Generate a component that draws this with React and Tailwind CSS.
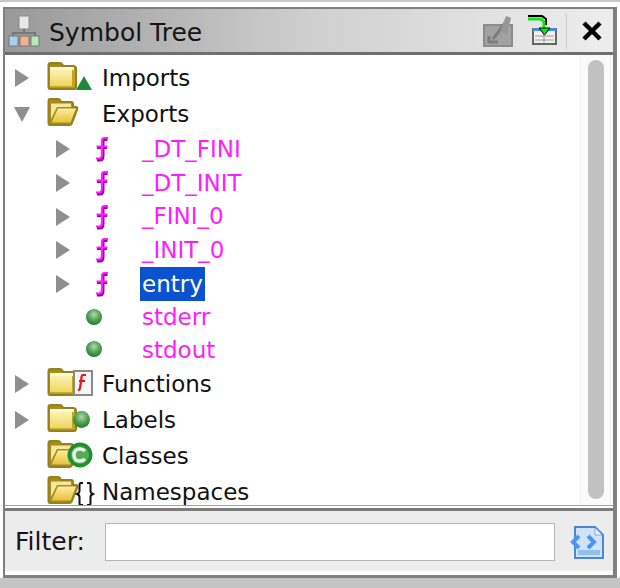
import React from "react";

const Tri = ({ open }) => (
  <svg width="16" height="18" viewBox="0 0 16 18" className="block shrink-0">
    <polygon points={open ? "0,2 16,2 8,17" : "1,0 15,9 1,18"} fill="#8f8f8f" />
  </svg>
);

const Grad = () => (
  <svg width="0" height="0" className="absolute">
    <defs>
      <linearGradient id="fc" x1="0" y1="0" x2="0" y2="1">
        <stop offset="0" stopColor="#fbf2b4" />
        <stop offset="1" stopColor="#f0d65e" />
      </linearGradient>
      <linearGradient id="fo" x1="0" y1="0" x2="0" y2="1">
        <stop offset="0" stopColor="#fbeea0" />
        <stop offset="1" stopColor="#e6c23e" />
      </linearGradient>
      <radialGradient id="ball" cx="0.5" cy="0.35" r="0.65">
        <stop offset="0" stopColor="#b4d6b4" />
        <stop offset="0.6" stopColor="#4d9c4d" />
        <stop offset="1" stopColor="#1f7f2a" />
      </radialGradient>
    </defs>
  </svg>
);

const FolderClosed = () => (
  <svg width="32" height="28" viewBox="0 0 32 28" className="block shrink-0">
    <path d="M1.5 3 Q1.5 1 3.5 1 H13 Q15 1 16 4 H26 Q29 4 29 7 V25 Q29 27 27 27 H3 Q1.5 27 1.5 25 Z" fill="#a78c1c" stroke="#94801c" strokeWidth="2" />
    <rect x="3" y="5" width="24" height="3" fill="#fdf8d8" />
    <rect x="3" y="8" width="22" height="16" fill="url(#fc)" />
    <rect x="25" y="8" width="3" height="17" fill="#c2a428" />
    <rect x="3" y="24" width="24" height="1.5" fill="#c8aa2c" />
  </svg>
);

const FolderOpen = () => (
  <svg width="32" height="28" viewBox="0 0 32 28" className="block shrink-0">
    <path d="M1.5 3 Q1.5 1 3.5 1 H11 Q13 1 14 4 H24 Q26 4 26 6 V9 H29 Q31 9 30 12 L25 25 Q24.5 27 23 27 H3 Q1.5 27 1.5 25 Z" fill="#a78c1c" stroke="#94801c" strokeWidth="2" />
    <path d="M4 5.5 H24 V9 H10 L4 21 Z" fill="#f7e79a" />
    <path d="M11 10.5 H29 L23.5 24.5 H4.5 Z" fill="url(#fo)" />
  </svg>
);

const Func = () => (
  <svg width="14" height="26" viewBox="0 0 14 26" className="block shrink-0">
    <path d="M12.5 3.5 H9.5 Q8 3.5 8 6 V20 Q8 24 5 24 H2" fill="none" stroke="#9a009a" strokeWidth="3" />
    <path d="M2 12 H12" stroke="#9a009a" strokeWidth="2" />
    <path d="M13 2 H9.5 Q7 2 7 5 V18.5 Q7 22.5 4 22.5 H1" fill="none" stroke="#ff1cff" strokeWidth="2.2" />
    <path d="M1.5 10.5 H12.5" stroke="#ff1cff" strokeWidth="2" />
  </svg>
);

const Ball = () => (
  <svg width="16" height="16" viewBox="0 0 16 16" className="block shrink-0">
    <circle cx="8" cy="8" r="8" fill="url(#ball)" />
  </svg>
);

const Row = ({ h, pl, tri, icon, iconW, label, labelClass = "text-[#111]" }) => (
  <div className="flex items-center shrink-0" style={{ height: h, paddingLeft: pl }}>
    <div className="w-[32px] shrink-0 flex items-center">{tri}</div>
    <div className="shrink-0 flex items-center" style={{ width: iconW }}>{icon}</div>
    <div className={labelClass}>{label}</div>
  </div>
);

const TopIcon = ({ children }) => (
  <div className="relative w-[50px] h-[28px] ml-[1px] mb-[4px]">{children}</div>
);

const fnHeights = [34, 34, 33, 34];

export default function App() {
  return (
    <div className="relative w-[620px] h-[588px] bg-[#c4c4c4] flex flex-col overflow-hidden text-[23px] leading-none" style={{ fontFamily: '"DejaVu Sans", sans-serif' }}>
      <Grad />
      <div className="h-[2px] bg-[#c8c8c8] shrink-0" />
      <div className="h-[576px] w-[620px] bg-white pt-[5px] pr-[3px] pl-[3px] flex flex-col shrink-0">
        <div className="flex-1 flex flex-col border-t-[2px] border-l-[2px] border-b-[3px] border-r-[4px] border-[#7f7f7f] bg-white min-h-0">
          {/* title bar */}
          <div className="h-[46px] shrink-0 flex items-center border-b-[3px] border-[#6f6f6f] bg-gradient-to-r from-[#999999] via-[#cfcfcf] to-[#eeeeee]">
            <svg width="32" height="32" viewBox="0 0 32 32" className="ml-[3px] block shrink-0">
              <rect x="11" y="1" width="10" height="13" fill="#e8e8e8" stroke="#8a8a8a" />
              <path d="M16 14 V18 M5 21 V18 H27 V21" stroke="#777" strokeWidth="2" fill="none" />
              <rect x="1" y="21" width="9" height="10" fill="#a9d0ee" stroke="#777" />
              <rect x="12" y="21" width="9" height="10" fill="#f2b290" stroke="#777" />
              <rect x="23" y="21" width="8" height="10" fill="#b4ecb4" stroke="#777" />
            </svg>
            <span className="ml-[9px] mt-[3px] text-[#141414] text-[25px]">Symbol Tree</span>
            <div className="ml-auto flex items-center">
              <svg width="30" height="32" viewBox="0 0 30 32" className="block shrink-0">
                <rect x="1" y="10" width="28" height="21" fill="#a2a2a2" stroke="#8c8c8c" strokeWidth="2" />
                <path d="M6 21 V27 H15 M10 24 L22 8" stroke="#7c7c7c" strokeWidth="3" fill="none" />
                <path d="M17 17 L23 1 L28 3 L24 19 Z" fill="#969696" />
              </svg>
              <svg width="30" height="32" viewBox="0 0 30 32" className="ml-[15px] block shrink-0">
                <rect x="5" y="14" width="23" height="15" fill="#f0f0f0" stroke="#666" strokeWidth="2" />
                <rect x="5" y="13" width="23" height="3" fill="#3b8fe6" />
                <path d="M7 21 H26 M7 25 H26 M16 17 V28" stroke="#9a9a9a" />
                <path d="M0 1 H14 L18 4 V10" stroke="#000" strokeWidth="2" fill="none" />
                <path d="M0 4 H13 L16 7 V14" stroke="#16e016" strokeWidth="3" fill="none" />
                <path d="M11 13 H22 L16.5 20 Z" fill="#16e016" stroke="#000" />
              </svg>
              <div className="w-px h-[36px] bg-[#cccccc] ml-[8px]" />
              <svg width="20" height="20" viewBox="0 0 20 20" className="ml-[15px] mr-[11px] block shrink-0">
                <path d="M2 2 L18 18 M18 2 L2 18" stroke="#000" strokeWidth="4.5" />
              </svg>
            </div>
          </div>
          {/* tree */}
          <div className="flex-1 min-h-0 flex pt-[5px] overflow-hidden">
            <div className="flex-1 flex flex-col min-w-0 overflow-hidden">
              <Row h={36} pl={9} tri={<Tri />} iconW={56} icon={
                <TopIcon><FolderClosed />
                  <svg width="16" height="14" viewBox="0 0 16 14" className="absolute left-[29px] top-[14px]"><polygon points="8,0 16,14 0,14" fill="#1f8a3f" /></svg>
                </TopIcon>} label="Imports" />
              <Row h={36} pl={9} tri={<Tri open />} iconW={56} icon={<TopIcon><FolderOpen /></TopIcon>} label="Exports" />
              {["_DT_FINI", "_DT_INIT", "_FINI_0", "_INIT_0"].map((n, i) => (
                <Row key={n} h={fnHeights[i]} pl={50} tri={<Tri />} iconW={53} icon={<div className="pl-[8px]"><Func /></div>} label={n} labelClass="text-[#ff1cff] pl-[2px]" />
              ))}
              <Row h={34} pl={50} tri={<Tri />} iconW={53} icon={<div className="pl-[8px]"><Func /></div>} label="entry" labelClass="bg-[#0a52d0] text-white h-[34px] flex items-center px-[2px]" />
              {[["stderr", 33], ["stdout", 32]].map(([n, h]) => (
                <Row key={n} h={h} pl={50} iconW={53} icon={<div className="-ml-[1px] mb-[2px]"><Ball /></div>} label={n} labelClass="text-[#ff1cff] pl-[2px]" />
              ))}
              <Row h={36} pl={9} tri={<Tri />} iconW={56} icon={
                <TopIcon><FolderClosed />
                  <svg width="20" height="26" viewBox="0 0 20 26" className="absolute left-[26px] top-[2px]">
                    <rect x="1" y="1" width="18" height="24" fill="#f6f6f6" stroke="#8a8a8a" strokeWidth="2" />
                    <path d="M13 5 H10 Q8.5 5 8.5 8 L7 18 Q7 20 5 20 M6 11 H12" fill="none" stroke="#ee1111" strokeWidth="2.2" />
                  </svg>
                </TopIcon>} label="Functions" />
              <Row h={36} pl={9} tri={<Tri />} iconW={56} icon={
                <TopIcon><FolderClosed />
                  <svg width="17" height="17" viewBox="0 0 16 16" className="absolute left-[26px] top-[7px]">
                    <circle cx="8" cy="8" r="8" fill="url(#ball)" />
                  </svg>
                </TopIcon>} label="Labels" />
              <Row h={36} pl={9} iconW={56} icon={
                <TopIcon><FolderOpen />
                  <svg width="26" height="26" viewBox="0 0 26 26" className="absolute left-[20px] top-[2px]">
                    <circle cx="13" cy="13" r="12.5" fill="#1f8f2f" />
                    <circle cx="13" cy="13" r="9" fill="#56a956" />
                    <path d="M18 9 Q16 7 13 7 Q7 7 7 13 Q7 19 13 19 Q16 19 18 17" fill="none" stroke="#e8f5e8" strokeWidth="3.5" />
                  </svg>
                </TopIcon>} label="Classes" />
              <Row h={36} pl={9} iconW={56} icon={
                <TopIcon><FolderOpen />
                  <svg width="20" height="24" viewBox="0 0 20 24" className="absolute left-[28px] top-[6px]">
                    <path d="M8 1 H6 Q4.5 1 4.5 3 V9 Q4.5 11 2 12 Q4.5 13 4.5 15 V21 Q4.5 23 6 23 H8 M12 1 H14 Q15.5 1 15.5 3 V9 Q15.5 11 18 12 Q15.5 13 15.5 15 V21 Q15.5 23 14 23 H12" fill="none" stroke="#111" strokeWidth="2" />
                  </svg>
                </TopIcon>} label="Namespaces" />
            </div>
            {/* scrollbar */}
            <div className="w-[31px] shrink-0 border-l border-r border-[#f0f0f0] bg-[#fafafa] flex justify-center pb-[6px] -mt-[5px] mr-[2px]">
              <div className="w-[16px] mt-[5px] bg-[#c1c1c1] rounded-full" />
            </div>
          </div>
          {/* filter */}
          <div className="h-[70px] shrink-0 flex flex-col">
            <div className="h-[1px] bg-[#a0a0a0] shrink-0" />
            <div className="h-[2px] bg-white shrink-0" />
            <div className="h-[3px] bg-[#7b7b7b] shrink-0" />
            <div className="flex-1 bg-[#ececec] flex items-center">
              <span className="ml-[10px] text-[#141414] text-[25px]">Filter:</span>
              <div className="ml-[20px] mt-[2px] w-[450px] h-[38px] bg-white border border-[#b4b4b4]" />
              <svg width="34" height="34" viewBox="0 0 34 34" className="ml-[15px] mt-[3px] block shrink-0">
                <path d="M5 1 H25 L33 9 V32 H5 Z" fill="#cfe2fa" stroke="#4a86d8" strokeWidth="2" />
                <path d="M25 2 V9 H32" fill="#eef5fd" stroke="#7fa9e0" />
                <rect x="8" y="24" width="22" height="5" fill="#8fc0f0" />
                <path d="M9 10 L3 16 L9 22 M18 10 L24 16 L18 22" fill="none" stroke="#4e95e8" strokeWidth="4" />
              </svg>
            </div>
            <div className="h-[4px] bg-white shrink-0" />
          </div>
        </div>
      </div>
    </div>
  );
}
